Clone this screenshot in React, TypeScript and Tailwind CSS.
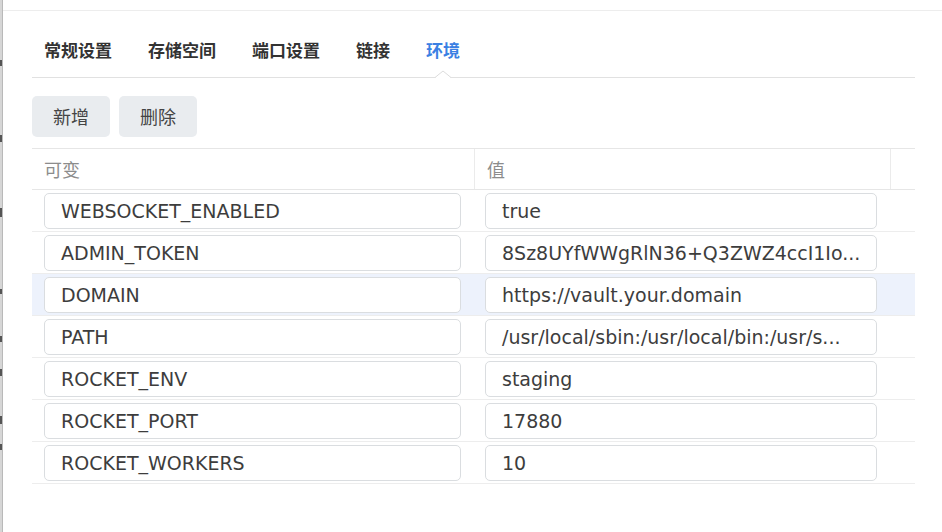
import React from 'react';

const tabs = ['常规设置', '存储空间', '端口设置', '链接', '环境'];

const rows = [
  { name: 'WEBSOCKET_ENABLED', value: 'true' },
  { name: 'ADMIN_TOKEN', value: '8Sz8UYfWWgRlN36+Q3ZWZ4ccI1Io...' },
  { name: 'DOMAIN', value: 'https://vault.your.domain' },
  { name: 'PATH', value: '/usr/local/sbin:/usr/local/bin:/usr/s...' },
  { name: 'ROCKET_ENV', value: 'staging' },
  { name: 'ROCKET_PORT', value: '17880' },
  { name: 'ROCKET_WORKERS', value: '10' },
];

const cjk = { fontFamily: '"Noto Sans CJK SC", "Noto Sans", sans-serif' };
const latin = { fontFamily: '"DejaVu Sans", "Noto Sans CJK SC", sans-serif' };

const Field = ({ text, className }: { text: string; className: string }) => (
  <div
    className={`flex h-[36px] items-center overflow-hidden whitespace-nowrap rounded-[5px] border border-[#dadde0] bg-white px-4 pt-px text-[19px] text-[#3d3d3d] ${className}`}
    style={latin}
  >
    {text}
  </div>
);

const App = () => {
  return (
    <div className="flex h-[532px] w-[942px] overflow-hidden bg-white" style={cjk}>
      {/* sliver of the window behind */}
      <div className="flex w-[3px] shrink-0 flex-col border-r border-[#b9b9b9] bg-[#d6d6d6]">
        <div className="mt-[60px] h-[6px] bg-[#555]" />
        <div className="mt-[69px] h-[7px] bg-[#555]" />
        <div className="mt-[66px] h-[9px] bg-[#555]" />
        <div className="mt-[72px] h-[5px] bg-[#555]" />
        <div className="mt-[42px] h-[6px] bg-[#555]" />
        <div className="mt-[27px] h-[7px] bg-[#555]" />
        <div className="mt-[40px] h-[8px] bg-[#555]" />
        <div className="mt-[20px] h-[6px] bg-[#555]" />
      </div>

      <div className="flex-1">
        <div className="h-[10px]" />
        <div className="border-t border-[#ededed] pl-[29px] pr-[27px]">
          {/* Tabs */}
          <div className="flex h-[67px] gap-9 border-b border-[#e1e1e1] pl-3">
            {tabs.map((t) => {
              const active = t === '环境';
              return (
                <div
                  key={t}
                  className={`relative pt-[27px] text-[17px] font-semibold leading-[24px] ${
                    active ? 'text-[#3a80e3]' : 'text-[#333]'
                  }`}
                >
                  {t}
                  {active && (
                    <svg
                      className="absolute bottom-[-1px] left-1/2 -translate-x-1/2"
                      width="16"
                      height="8"
                      viewBox="0 0 16 8"
                    >
                      <polygon points="0,8 8,1.5 16,8" fill="#fff" />
                      <polyline points="0,7.5 8,1 16,7.5" fill="none" stroke="#dcdcdc" strokeWidth="1" />
                    </svg>
                  )}
                </div>
              );
            })}
          </div>

          {/* Toolbar */}
          <div className="mt-[18px] flex gap-[9px]">
            <button className="h-[41px] w-[78px] rounded-[5px] bg-[#e9ecef] text-[18px] text-[#444]">新增</button>
            <button className="h-[41px] w-[78px] rounded-[5px] bg-[#e9ecef] text-[18px] text-[#444]">删除</button>
          </div>

          {/* Table */}
          <div className="mt-[11px]">
            <div className="flex h-[42px] border-y border-[#e6e6e6] text-[18px] text-[#8c8c8c]">
              <div className="flex w-[443px] items-center border-r border-[#ebebeb] pl-3">可变</div>
              <div className="flex w-[416px] items-center border-r border-[#ebebeb] pl-3">值</div>
              <div className="flex-1" />
            </div>
            {rows.map((r) => (
              <div
                key={r.name}
                className={`flex h-[42px] items-center border-b border-[#ededed] ${
                  r.name === 'DOMAIN' ? 'bg-[#edf2fc]' : ''
                }`}
              >
                <div className="w-[442px] pl-3">
                  <Field text={r.name} className="w-[417px]" />
                </div>
                <div className="pl-[11px]">
                  <Field text={r.value} className="w-[392px]" />
                </div>
              </div>
            ))}
          </div>
        </div>
      </div>
    </div>
  );
};

export default App;
